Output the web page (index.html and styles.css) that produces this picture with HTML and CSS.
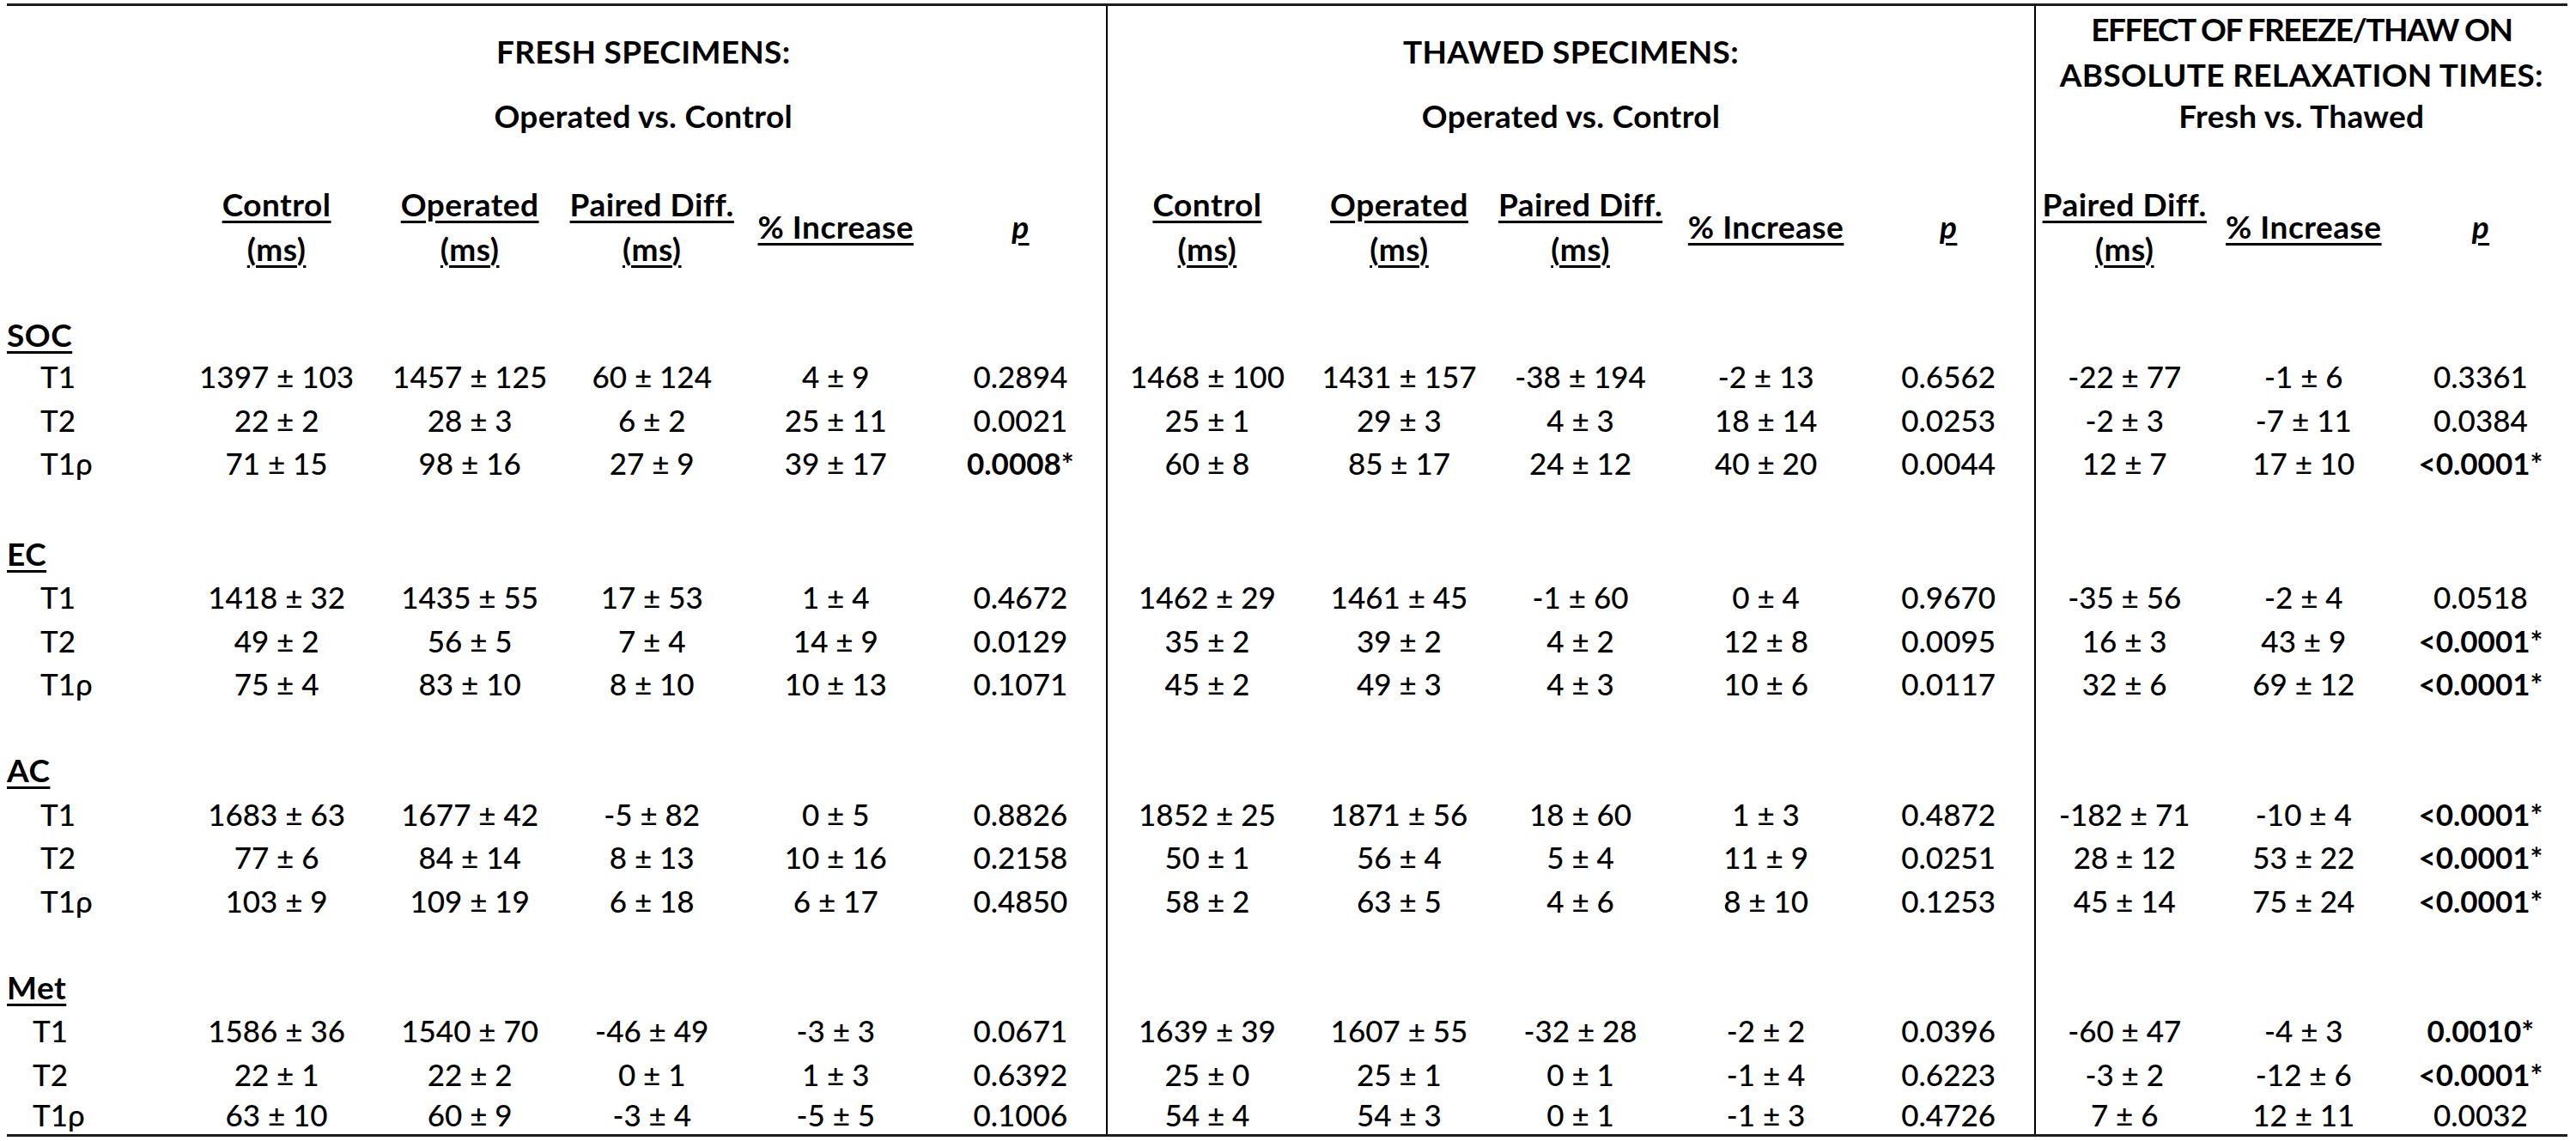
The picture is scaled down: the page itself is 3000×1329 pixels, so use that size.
FILE: index.html
```html
<!DOCTYPE html>
<html lang="en">
<head>
<meta charset="utf-8">
<title>Relaxation times: fresh vs. thawed specimens</title>
<link rel="stylesheet" href="styles.css">
</head>
<body>
<div class="page">
<table class="results">
<colgroup>
<col class="w-label"><col class="w224"><col class="w226"><col class="w198"><col class="w230"><col class="w201">
<col class="w232"><col class="w216"><col class="w206"><col class="w226"><col class="w200">
<col class="w208"><col class="w210"><col class="w202">
</colgroup>
<tbody>
<tr class="r-h1">
<td></td>
<td colspan="5" rowspan="2" class="grp">FRESH SPECIMENS:</td>
<td colspan="5" rowspan="2" class="grp sep">THAWED SPECIMENS:</td>
<td colspan="3" class="grp grp-tight sep">EFFECT OF FREEZE/THAW ON</td>
</tr>
<tr class="r-h2">
<td></td>
<td colspan="3" class="grp sep">ABSOLUTE RELAXATION TIMES:</td>
</tr>
<tr class="r-h3">
<td></td>
<td colspan="5" class="grp">Operated vs. Control</td>
<td colspan="5" class="grp sep">Operated vs. Control</td>
<td colspan="3" class="grp sep">Fresh vs. Thawed</td>
</tr>
<tr class="r-gap1">
<td></td><td colspan="5"></td><td colspan="5" class="sep"></td><td colspan="3" class="sep"></td>
</tr>
<tr class="r-cols">
<td></td>
<td class="ch"><span class="u">Control<br>(ms)</span></td>
<td class="ch"><span class="u">Operated<br>(ms)</span></td>
<td class="ch"><span class="u">Paired Diff.<br>(ms)</span></td>
<td class="ch"><span class="u">% Increase</span></td>
<td class="ch"><span class="u pv">p</span></td>
<td class="ch sep"><span class="u">Control<br>(ms)</span></td>
<td class="ch"><span class="u">Operated<br>(ms)</span></td>
<td class="ch"><span class="u">Paired Diff.<br>(ms)</span></td>
<td class="ch"><span class="u">% Increase</span></td>
<td class="ch"><span class="u pv">p</span></td>
<td class="ch sep"><span class="u">Paired Diff.<br>(ms)</span></td>
<td class="ch"><span class="u">% Increase</span></td>
<td class="ch"><span class="u pv">p</span></td>
</tr>
<tr class="r-gap2">
<td></td><td colspan="5"></td><td colspan="5" class="sep"></td><td colspan="3" class="sep"></td>
</tr>

<tr class="row head-first"><th class="sec"><span class="u">SOC</span></th><td colspan="5"></td><td colspan="5" class="sep"></td><td colspan="3" class="sep"></td></tr>
<tr class="row"><th class="sub">T1</th><td>1397 ± 103</td><td>1457 ± 125</td><td>60 ± 124</td><td>4 ± 9</td><td>0.2894</td><td class="sep">1468 ± 100</td><td>1431 ± 157</td><td>-38 ± 194</td><td>-2 ± 13</td><td>0.6562</td><td class="sep">-22 ± 77</td><td>-1 ± 6</td><td>0.3361</td></tr>
<tr class="row"><th class="sub">T2</th><td>22 ± 2</td><td>28 ± 3</td><td>6 ± 2</td><td>25 ± 11</td><td>0.0021</td><td class="sep">25 ± 1</td><td>29 ± 3</td><td>4 ± 3</td><td>18 ± 14</td><td>0.0253</td><td class="sep">-2 ± 3</td><td>-7 ± 11</td><td>0.0384</td></tr>
<tr class="row"><th class="sub">T1ρ</th><td>71 ± 15</td><td>98 ± 16</td><td>27 ± 9</td><td>39 ± 17</td><td class="sig">0.0008*</td><td class="sep">60 ± 8</td><td>85 ± 17</td><td>24 ± 12</td><td>40 ± 20</td><td>0.0044</td><td class="sep">12 ± 7</td><td>17 ± 10</td><td class="sig">&lt;0.0001*</td></tr>
<tr class="row gap-first"><th></th><td colspan="5"></td><td colspan="5" class="sep"></td><td colspan="3" class="sep"></td></tr>

<tr class="row"><th class="sec"><span class="u">EC</span></th><td colspan="5"></td><td colspan="5" class="sep"></td><td colspan="3" class="sep"></td></tr>
<tr class="row"><th class="sub">T1</th><td>1418 ± 32</td><td>1435 ± 55</td><td>17 ± 53</td><td>1 ± 4</td><td>0.4672</td><td class="sep">1462 ± 29</td><td>1461 ± 45</td><td>-1 ± 60</td><td>0 ± 4</td><td>0.9670</td><td class="sep">-35 ± 56</td><td>-2 ± 4</td><td>0.0518</td></tr>
<tr class="row"><th class="sub">T2</th><td>49 ± 2</td><td>56 ± 5</td><td>7 ± 4</td><td>14 ± 9</td><td>0.0129</td><td class="sep">35 ± 2</td><td>39 ± 2</td><td>4 ± 2</td><td>12 ± 8</td><td>0.0095</td><td class="sep">16 ± 3</td><td>43 ± 9</td><td class="sig">&lt;0.0001*</td></tr>
<tr class="row"><th class="sub">T1ρ</th><td>75 ± 4</td><td>83 ± 10</td><td>8 ± 10</td><td>10 ± 13</td><td>0.1071</td><td class="sep">45 ± 2</td><td>49 ± 3</td><td>4 ± 3</td><td>10 ± 6</td><td>0.0117</td><td class="sep">32 ± 6</td><td>69 ± 12</td><td class="sig">&lt;0.0001*</td></tr>
<tr class="row"><th></th><td colspan="5"></td><td colspan="5" class="sep"></td><td colspan="3" class="sep"></td></tr>

<tr class="row"><th class="sec"><span class="u">AC</span></th><td colspan="5"></td><td colspan="5" class="sep"></td><td colspan="3" class="sep"></td></tr>
<tr class="row"><th class="sub">T1</th><td>1683 ± 63</td><td>1677 ± 42</td><td>-5 ± 82</td><td>0 ± 5</td><td>0.8826</td><td class="sep">1852 ± 25</td><td>1871 ± 56</td><td>18 ± 60</td><td>1 ± 3</td><td>0.4872</td><td class="sep">-182 ± 71</td><td>-10 ± 4</td><td class="sig">&lt;0.0001*</td></tr>
<tr class="row"><th class="sub">T2</th><td>77 ± 6</td><td>84 ± 14</td><td>8 ± 13</td><td>10 ± 16</td><td>0.2158</td><td class="sep">50 ± 1</td><td>56 ± 4</td><td>5 ± 4</td><td>11 ± 9</td><td>0.0251</td><td class="sep">28 ± 12</td><td>53 ± 22</td><td class="sig">&lt;0.0001*</td></tr>
<tr class="row"><th class="sub">T1ρ</th><td>103 ± 9</td><td>109 ± 19</td><td>6 ± 18</td><td>6 ± 17</td><td>0.4850</td><td class="sep">58 ± 2</td><td>63 ± 5</td><td>4 ± 6</td><td>8 ± 10</td><td>0.1253</td><td class="sep">45 ± 14</td><td>75 ± 24</td><td class="sig">&lt;0.0001*</td></tr>
<tr class="row"><th></th><td colspan="5"></td><td colspan="5" class="sep"></td><td colspan="3" class="sep"></td></tr>

<tr class="row"><th class="sec"><span class="u">Met</span></th><td colspan="5"></td><td colspan="5" class="sep"></td><td colspan="3" class="sep"></td></tr>
<tr class="row"><th class="sub sub-met">T1</th><td>1586 ± 36</td><td>1540 ± 70</td><td>-46 ± 49</td><td>-3 ± 3</td><td>0.0671</td><td class="sep">1639 ± 39</td><td>1607 ± 55</td><td>-32 ± 28</td><td>-2 ± 2</td><td>0.0396</td><td class="sep">-60 ± 47</td><td>-4 ± 3</td><td class="sig">0.0010*</td></tr>
<tr class="row"><th class="sub sub-met">T2</th><td>22 ± 1</td><td>22 ± 2</td><td>0 ± 1</td><td>1 ± 3</td><td>0.6392</td><td class="sep">25 ± 0</td><td>25 ± 1</td><td>0 ± 1</td><td>-1 ± 4</td><td>0.6223</td><td class="sep">-3 ± 2</td><td>-12 ± 6</td><td class="sig">&lt;0.0001*</td></tr>
<tr class="row last"><th class="sub sub-met">T1ρ</th><td>63 ± 10</td><td>60 ± 9</td><td>-3 ± 4</td><td>-5 ± 5</td><td>0.1006</td><td class="sep">54 ± 4</td><td>54 ± 3</td><td>0 ± 1</td><td>-1 ± 3</td><td>0.4726</td><td class="sep">7 ± 6</td><td>12 ± 11</td><td>0.0032</td></tr>
</tbody>
</table>
</div>
</body>
</html>
```

FILE: styles.css
```css
html, body {
  margin: 0;
  padding: 0;
  background: #ffffff;
}

.page {
  padding: 4px 0 0 8px;
}

.results {
  table-layout: fixed;
  width: 2982px;
  border-collapse: collapse;
  border-top: 3px solid #1c1c1c;
  border-bottom: 3px solid #1c1c1c;
  font-family: Lato, "Open Sans", "Liberation Sans", sans-serif;
  font-size: 35px;
  color: #000;
}

.w-label { width: 202px; }
.w224 { width: 224px; }
.w226 { width: 226px; }
.w198 { width: 198px; }
.w230 { width: 230px; }
.w201 { width: 201px; }
.w232 { width: 232px; }
.w216 { width: 216px; }
.w206 { width: 206px; }
.w200 { width: 200px; }
.w208 { width: 208px; }
.w210 { width: 210px; }
.w202 { width: 202px; }

.results td,
.results th {
  padding: 0;
  text-align: center;
  vertical-align: middle;
  white-space: nowrap;
  font-weight: 500;
}

.results .sep {
  border-left: 2px solid #000;
}

.results .grp {
  font-weight: 700;
  font-size: 37px;
  letter-spacing: 0.3px;
}

.results .grp-tight {
  letter-spacing: -1.5px;
}

.r-h1 { height: 54px; }
.r-h1 td { line-height: 54px; }
.r-h2 { height: 51px; }
.r-h2 td { line-height: 51px; }
.r-h3 { height: 46px; }
.r-h3 td { line-height: 46px; }
.r-gap1 { height: 54px; }
.r-cols { height: 104px; }
.r-gap2 { height: 51px; }

.results .ch {
  font-weight: 700;
  font-size: 37px;
  letter-spacing: 0.5px;
  line-height: 52px;
}

.u {
  text-decoration: underline;
  text-decoration-thickness: 3px;
  text-underline-offset: 5px;
}

.pv {
  font-style: italic;
}

.row { height: 50.5px; }
.row td, .row th { line-height: 50.5px; }
.row.head-first { height: 46px; }
.row.head-first td, .row.head-first th { line-height: 46px; }
.row.gap-first { height: 55px; }
.row.last { height: 45px; }
.row.last td, .row.last th { line-height: 45px; }

.results .sec {
  text-align: left;
  font-weight: 700;
  font-size: 37px;
  letter-spacing: 0.5px;
}

.results .sub {
  text-align: left;
  padding-left: 39px;
}

.results .sub-met {
  padding-left: 30px;
}

.results .sig {
  font-weight: 700;
}
```
